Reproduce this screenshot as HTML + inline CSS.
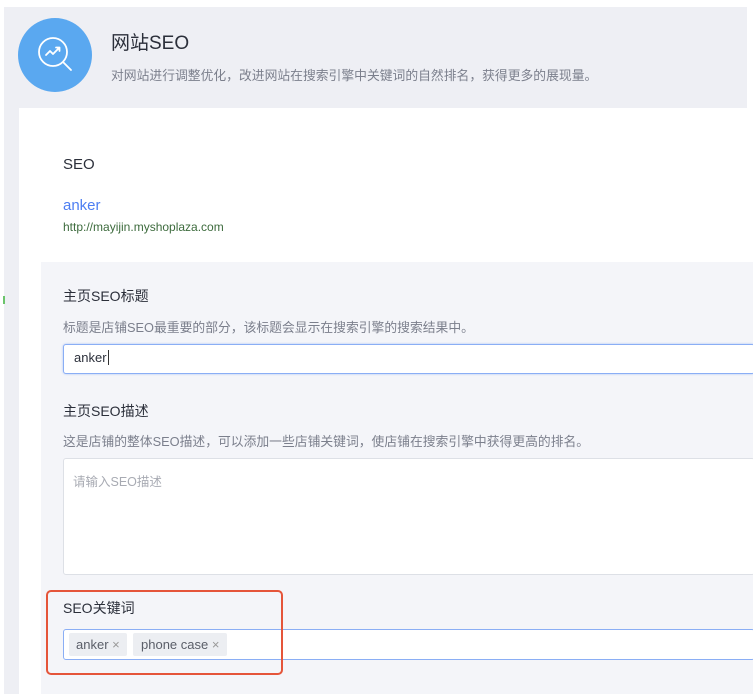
<!DOCTYPE html>
<html><head><meta charset="utf-8"><style>
*{margin:0;padding:0;box-sizing:border-box}
body{width:753px;height:694px;position:relative;overflow:hidden;background:#fff;font-family:"Liberation Sans","Noto Sans CJK SC",sans-serif}
.a{position:absolute;white-space:nowrap}
</style></head><body>
<div class="a" style="left:4px;top:7px;width:743px;height:101px;background:#eeeff4"></div>
<div class="a" style="left:4px;top:108px;width:15px;height:586px;background:#eeeff4"></div>
<div class="a" style="left:18px;top:18px;width:74px;height:74px;border-radius:50%;background:#5aa8f0"></div>
<svg class="a" style="left:30px;top:30px" width="50" height="50" viewBox="0 0 50 50" fill="none" stroke="#fff" stroke-width="1.8" stroke-linecap="round" stroke-linejoin="round">
<circle cx="23" cy="22" r="14"/><path d="M33 32l8 8"/><path d="M16 25l4-4 3 3 6-6m-3 -0.5h3.5v3.5"/></svg>
<div class="a" style="left:111px;top:28px;font-size:19px;color:#2b2f3a">网站SEO</div>
<div class="a" style="left:111px;top:65px;font-size:12.8px;color:#7b7f8c">对网站进行调整优化，改进网站在搜索引擎中关键词的自然排名，获得更多的展现量。</div>
<div class="a" style="left:63px;top:156px;font-size:15px;color:#2b2f3a">SEO</div>
<div class="a" style="left:63px;top:197px;font-size:15px;color:#4d7ef2">anker</div>
<div class="a" style="left:63px;top:220px;font-size:12px;color:#3d6b3d">http://mayijin.myshoplaza.com</div>
<div class="a" style="left:41px;top:262px;width:712px;height:432px;background:#f4f5f9"></div>
<div class="a" style="left:3px;top:296px;width:2px;height:8px;background:#6bc46b"></div>
<div class="a" style="left:63px;top:286px;font-size:14px;color:#2b2f3a">主页SEO标题</div>
<div class="a" style="left:63px;top:317px;font-size:12.8px;color:#7b7f8c">标题是店铺SEO最重要的部分，该标题会显示在搜索引擎的搜索结果中。</div>
<div class="a" style="left:63px;top:344px;width:692px;height:30px;background:#fff;border:1px solid #8aaef5;border-radius:3px;box-shadow:0 0 2px #a8c2f7"></div>
<div class="a" style="left:74px;top:350px;font-size:13px;color:#2b2f3a">anker<span style="border-left:1px solid #333;margin-left:1px"></span></div>
<div class="a" style="left:63px;top:401px;font-size:14px;color:#2b2f3a">主页SEO描述</div>
<div class="a" style="left:63px;top:431px;font-size:12.8px;color:#7b7f8c">这是店铺的整体SEO描述，可以添加一些店铺关键词，使店铺在搜索引擎中获得更高的排名。</div>
<div class="a" style="left:63px;top:458px;width:692px;height:117px;background:#fff;border:1px solid #dde0e6;border-radius:3px"></div>
<div class="a" style="left:73px;top:471px;font-size:12.5px;color:#a8abb3">请输入SEO描述</div>
<div class="a" style="left:63px;top:598px;font-size:14px;color:#2b2f3a">SEO关键词</div>
<div class="a" style="left:63px;top:629px;width:692px;height:31px;background:#fff;border:1px solid #8aaef5;border-radius:3px"></div>
<div class="a" style="left:69px;top:633px;height:23px;padding:0 7px;background:#eceef2;border-radius:2px;font-size:13px;line-height:23px;color:#5a5e68">anker <span style="color:#999">×</span></div>
<div class="a" style="left:133px;top:633px;height:23px;padding:0 8px;background:#eceef2;border-radius:2px;font-size:13px;line-height:23px;color:#5a5e68">phone case <span style="color:#999">×</span></div>
<div class="a" style="left:46px;top:590px;width:237px;height:85px;border:2px solid #e5553a;border-radius:5px"></div>
</body></html>
